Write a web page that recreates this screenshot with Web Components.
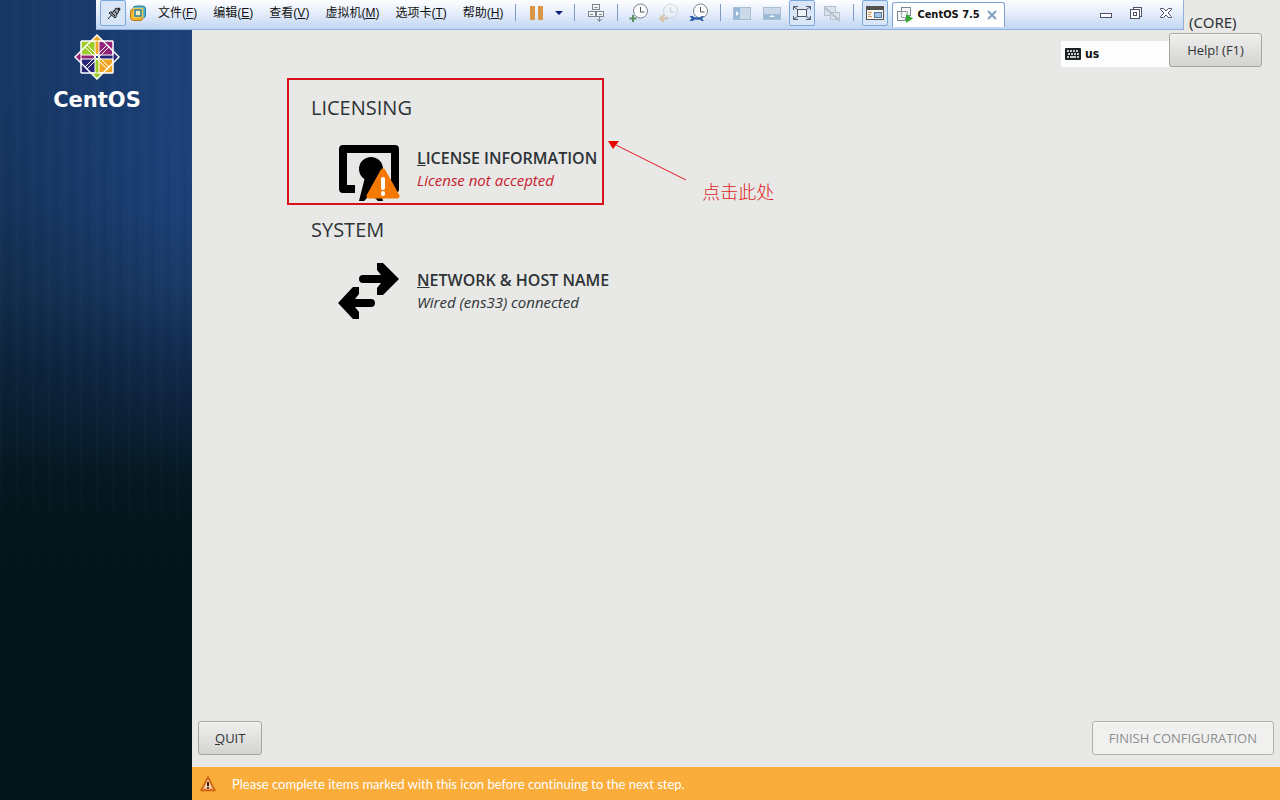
<!DOCTYPE html>
<html lang="en">
<head>
<meta charset="utf-8">
<meta name="viewport" content="width=device-width, initial-scale=1">
<title>CentOS 7.5</title>
<style>
  body {
    margin: 0;
    color: #2e3436;
    font-family: "Noto Sans", "Open Sans", sans-serif;
    font-size: 13px;
  }
</style>
</head>
<body>

<setup-screen>
  <brand-sidebar slot="side"></brand-sidebar>
  <hub-header slot="header" product="(CORE)" layout="us"></hub-header>

  <spoke-group heading="LICENSING" highlight>
    <hub-spoke icon="license" status="error">
      <span slot="name"><u>L</u>ICENSE INFORMATION</span>
      License not accepted
    </hub-spoke>
    <call-out slot="note">点击此处</call-out>
  </spoke-group>

  <spoke-group heading="SYSTEM">
    <hub-spoke icon="network">
      <span slot="name"><u>N</u>ETWORK &amp; HOST NAME</span>
      Wired (ens33) connected
    </hub-spoke>
  </spoke-group>

  <gtk-button slot="actions"><u>Q</u>UIT</gtk-button>
  <gtk-button slot="actions" disabled>FINISH CONFIGURATION</gtk-button>
  <warning-bar slot="warning">Please complete items marked with this icon before continuing to the next step.</warning-bar>
</setup-screen>

<vm-toolbar></vm-toolbar>

<script>
(function () {
  const ICONS = {
    pin: `<path d="M3 14 7 9.500" stroke="#222" stroke-width="1"/><path d="M4 8c2-2 3 0 5-2l2-3 3 2-1 3c-2 1-1 4-3 5z" fill="#9aa4ae" stroke="#222"/><path d="M6 7l4 4M9 5l3 4" stroke="#222"/><path d="M13 3l2 2" stroke="#222" stroke-width="2"/>`,
    vmware: `<rect x="3" y="1" width="12.500" height="12" rx="3" fill="#48b5d6" stroke="#277d9b"/><path d="M3 4a3 3 0 0 0-2.500 3v5.500a3 3 0 0 0 3 3H10a3 3 0 0 0 3-2.500H8L3 9z" fill="#f6b32c" stroke="#b87810"/><rect x="3.500" y="3.500" width="9" height="9" fill="#f5d36a" stroke="#f6c54c" stroke-width="1.500"/><rect x="5" y="5" width="6" height="6" fill="#f3edc0" stroke="#2b7f9c" stroke-width="1.500"/>`,
    pause: `<path d="M1 1h5v14H1zM9 1h5v14H9z" fill="#dc9447"/>`,
    keys: `<g fill="#f6f8fa" stroke="#7d858d"><rect x="4.500" y="-.5" width="7" height="5"/><rect x=".5" y="6.500" width="7" height="5"/><rect x="8.500" y="6.500" width="7" height="5"/><path d="M2 9.500h3M11 9.500h3M6.500 2.500h3M11.500 11.500v5M9 14l2.500 2.500L14 14" fill="none"/></g>`,
    snapshot: `<circle cx="9.500" cy="6" r="7" fill="#fbfcfd" stroke="#7b838a"/><path d="M9.500 2v5h4" fill="none" stroke="#555"/><path d="M2 10v7M-1.500 13.500h7" stroke="#5b9160" stroke-width="2"/>`,
    revert: `<g opacity=".45"><circle cx="9.500" cy="6" r="7" fill="#f4f6f8" stroke="#a9b1b9"/><path d="M9.500 2v5h4" fill="none" stroke="#999"/><path d="M7 13.500H0M3 10l-4 3.500L3 17" fill="none" stroke="#d79a4a" stroke-width="2"/></g>`,
    manage: `<circle cx="9.500" cy="6" r="7" fill="#fbfcfd" stroke="#7b838a"/><path d="M9.500 2v5h4" fill="none" stroke="#555"/><path d="M1 13.500h9" stroke="#2e62a8" stroke-width="2.500"/><path d="M-1.500 11H2l2 2.500L2 16h-3.500l2-2.500zM13 11h-2.500l-2 2.500 2 2.500H13l-2-2.500z" fill="#2e62a8"/>`,
    library: `<rect x="-.5" y="2.500" width="17" height="12" fill="#c9d9ea" stroke="#a9bdd3"/><path d="M0 3h6v11H0z" fill="#9bbad8"/><path d="M2 6l3 2.500L2 11z" fill="#fff"/>`,
    thumbs: `<rect x="-.5" y="2.500" width="17" height="12" fill="#c9d9ea" stroke="#a9bdd3"/><path d="M0 9h16v5H0z" fill="#9bbad8"/><path d="M5 12l3-2 3 2z" fill="#fff"/>`,
    full: `<rect x="3.500" y="4.500" width="9" height="7" fill="#eef4fa" stroke="#4e5963"/><path d="M-.5 5V1.500H4M12 1.500h4.500V5M16.500 11v3.500H12M4 14.500H-.5V11M0 2l3 2M16 2l-3 2M0 14l3-2M16 14l-3-2" fill="none" stroke="#4e5963"/>`,
    unity: `<g fill="#dbe3ec" stroke="#b4c0cd"><rect x=".5" y="1.500" width="11" height="9"/><rect x="6.500" y="7.500" width="9" height="7"/><path d="M0 2l16 14" stroke-width="2"/></g>`,
    console: `<rect x="-.5" y="1.500" width="17" height="13" fill="#f7f7f5" stroke="#54524f"/><path d="M0 2h16v3H0z" fill="#54524f"/><path d="M1 7.500h4M1 9.500h3M1 11.500h4" stroke="#d69c55"/><rect x="7.500" y="7.500" width="7" height="5" fill="#a5c4e4" stroke="#52779c"/>`,
    machine: `<g fill="#f5f6f7" stroke="#7d858d"><rect x="4.500" y=".5" width="9" height="8"/><rect x=".5" y="4.500" width="8" height="9"/><rect x="4.500" y="4.500" width="6" height="6" stroke-dasharray="2 1"/></g><path d="M9 7l7 4.500L9 16z" fill="#35a935"/>`,
    min: `<rect x="2.500" y="8.500" width="11" height="4" fill="#fff" stroke="#50506b"/>`,
    restore: `<g fill="#fff" stroke="#50506b"><rect x="5.500" y="2.500" width="8" height="9"/><rect x="2.500" y="4.500" width="9" height="9"/><rect x="5.500" y="7.500" width="3" height="3"/></g>`,
    close: `<path d="M2.500 3.500h3L8 6l2.500-2.500h3v1L10 8l3.500 3.500v1h-3L8 10l-2.500 2.500h-3v-1L6 8 2.500 4.500z" fill="#fff" stroke="#50506b"/>`,
    keyboard: `<rect width="16" height="12" y="2" rx="1" fill="#1d2224"/><path d="M2 5h12M3 8h11" stroke="#fff" stroke-width="1.500" stroke-dasharray="2 1"/><path d="M2 11h2M5 11h6M12 11h2" stroke="#fff" stroke-width="1.500"/>`,
    alert: `<path d="M8 1 15 14.500H1z" fill="#ee8a3c" stroke="#c9600f" stroke-width="1.500" stroke-linejoin="round"/><path d="M8 3.500 12.500 12.500h-9z" fill="#f7cfae"/><path d="M8 6v4M8 11v1.500" stroke="#3d1c08" stroke-width="2"/>`
  };

  const icon = (name, size = 16) =>
    `<svg width="${size}" height="${size}" viewBox="0 0 16 16" fill="none" overflow="visible" aria-hidden="true">${ICONS[name]}</svg>`;

  const render = (el, html) => {
    el.attachShadow({ mode: 'open' }).innerHTML = html;
  };

  customElements.define('setup-screen', class extends HTMLElement {
    connectedCallback() {
      render(this, `
        <style>
          :host {
            display: grid;
            grid-template-columns: 15% 1fr;
            min-height: 100vh;
            background: #e8e8e6;
          }
          main { display: flex; flex-direction: column; min-width: 0; }
          .spokes {
            flex: 1;
            display: flex;
            flex-direction: column;
            align-items: flex-start;
            padding: 11px 24px 24px 95px;
          }
          footer { display: flex; justify-content: space-between; padding: 0 6px 12px; }
        </style>
        <slot name="side"></slot>
        <main>
          <slot name="header"></slot>
          <div class="spokes"><slot></slot></div>
          <footer><slot name="actions"></slot></footer>
          <slot name="warning"></slot>
        </main>`);
    }
  });

  customElements.define('brand-sidebar', class extends HTMLElement {
    connectedCallback() {
      render(this, `
        <style>
          :host {
            display: flex;
            flex-direction: column;
            align-items: center;
            gap: 8px;
            padding: 34px 0 0 2px;
            color: #fff;
            background:
              linear-gradient(180deg, #1b3c7066 0 10%, transparent 30% 55%, #02151a 74%),
              repeating-linear-gradient(90deg, #ffffff04 0 2px, transparent 2px 7px, #0000000c 7px 10px, transparent 10px 16px),
              linear-gradient(90deg, #02151a55, transparent 90%),
              linear-gradient(180deg, #1d437c 0 18%, #1c4078 26%, #193965 36%, #132f55 42%, #0f2440 50%, #081c2a 58%, #04171d 70%, #02151a 76%);
          }
          .name {
            font: bold 21px/24px "DejaVu Sans", sans-serif;
          }
        </style>
        <svg width="46" height="46" viewBox="0 0 46 46" stroke="#fff" aria-hidden="true">
          <path d="M7 7h16v16H7z" fill="#9ccd2a"/>
          <path d="M23 7h16v16H23z" fill="#932279"/>
          <path d="M7 23h16v16H7z" fill="#262577"/>
          <path d="M23 23h16v16H23z" fill="#efa724"/>
          <path d="M23 1l6 6h-4v14h-4V7h-4z" fill="#efa724"/>
          <path d="M45 23l-6 6v-4H25v-4h14v-4z" fill="#262577"/>
          <path d="M23 45l-6-6h4V25h4v14h4z" fill="#9ccd2a"/>
          <path d="M1 23l6-6v4h14v4H7v4z" fill="#932279"/>
          <path d="M23 1 45 23 23 45 1 23z" fill="none" stroke-width="1.500"/>
          <path d="M7 7h32v32H7zM11 13l10 10M13 11l10 10M35 13 25 23M33 11 23 21M11 33l10-10M13 35l10-10M35 33 25 23M33 35 23 25" fill="none"/>
          <path d="M21.500 21.500h3v3h-3z" fill="#1d437c"/>
        </svg>
        <div class="name">CentOS</div>`);
    }
  });

  customElements.define('hub-header', class extends HTMLElement {
    connectedCallback() {
      render(this, `
        <style>
          :host {
            display: flex;
            justify-content: flex-end;
            align-items: flex-end;
            padding: 12px 18px 0;
          }
          .layout {
            display: flex;
            align-items: center;
            gap: 4px;
            width: 108px;
            height: 26px;
            padding: 0 4px;
            border: 0;
            box-sizing: border-box;
            background: #fdfdfd;
            color: #111;
            font: bold 12px/16px "DejaVu Sans Condensed", "DejaVu Sans", sans-serif;
          }
          .product { padding-left: 20px; font-size: 15px; line-height: 21px; }
          gtk-button { min-width: 93px; }
        </style>
        <button class="layout" type="button" aria-label="Keyboard layout">${icon('keyboard')}<span>${this.getAttribute('layout')}</span></button>
        <div>
          <div class="product">${this.getAttribute('product')}</div>
          <gtk-button>Help! (F1)</gtk-button>
        </div>`);
    }
  });

  customElements.define('gtk-button', class extends HTMLElement {
    connectedCallback() {
      const disabled = this.hasAttribute('disabled') ? 'disabled' : '';
      render(this, `
        <style>
          :host { display: block; }
          button {
            display: block;
            width: 100%;
            height: 34px;
            padding: 0 16px;
            border: 1px solid #a5a5a1;
            border-radius: 3px;
            background: linear-gradient(#efefee, #d3d3d0);
            box-shadow: inset 0 1px #f8f8f8;
            color: #2e3436;
            font: 13px/20px "Open Sans", sans-serif;
            white-space: nowrap;
          }
          button:disabled { background: #f0f0ef; border-color: #b0b0ac; color: #8b8e8f; }
        </style>
        <button type="button" ${disabled}><slot></slot></button>`);
    }
  });

  customElements.define('spoke-group', class extends HTMLElement {
    connectedCallback() {
      render(this, `
        <style>
          :host { display: block; position: relative; padding: 11px 5px 2px 24px; }
          :host([highlight]) { border: 2px solid #d9111b; padding: 14px 5px 1px 22px; }
          h2 { margin: 0 0 22px; font: 20px/28px "Open Sans", sans-serif; }
        </style>
        <h2>${this.getAttribute('heading')}</h2>
        <slot></slot>
        <slot name="note"></slot>`);
    }
  });

  customElements.define('hub-spoke', class extends HTMLElement {
    connectedCallback() {
      const art = {
        license: `
          <path d="M5 1h52a4 4 0 0 1 4 4v40a4 4 0 0 1-4 4H45v-8h8V9H9v32h8v8H5a4 4 0 0 1-4-4V5a4 4 0 0 1 4-4z"/>
          <circle cx="33" cy="25" r="12"/>
          <path d="M27 33h12l6 24h-5l-7-7-7 7h-5z"/>
          <path d="M45 27 59 52H31z" fill="#f57900" stroke="#f57900" stroke-width="5" stroke-linejoin="round"/>
          <path d="M45 35v9M45 49v1" stroke="#fff" stroke-width="4" stroke-linecap="round"/>`,
        network: `
          <path d="M25 9h18l-4-5v-7h6L61 13 45 29h-6v-7l4-5H25a4 4 0 0 1 0-8z"/>
          <path d="M33 41H17l4 5v7h-6L0 37l15-16h6v7l-4 5h16a4 4 0 0 1 0 8z"/>`
      };
      render(this, `
        <style>
          :host { display: block; }
          a { display: flex; gap: 15px; padding-left: 27px; color: inherit; text-decoration: none; }
          svg { display: block; flex: none; overflow: visible; }
          .text { padding-top: 3px; line-height: 22px; white-space: nowrap; font-family: "Open Sans", sans-serif; }
          .name { font-size: 16px; font-weight: 600; }
          .status { font-style: italic; font-size: 15px; }
          :host([status="error"]) .status { color: #c8202c; }
        </style>
        <a href="#">
          <svg width="64" height="58" viewBox="0 0 64 58" aria-hidden="true">${art[this.getAttribute('icon')]}</svg>
          <div class="text">
            <div class="name"><slot name="name"></slot></div>
            <div class="status"><slot></slot></div>
          </div>
        </a>`);
    }
  });

  // Red note that hangs off the right edge of a group
  customElements.define('call-out', class extends HTMLElement {
    connectedCallback() {
      render(this, `
        <style>
          :host {
            position: absolute;
            left: 100%;
            top: 59px;
            display: flex;
            align-items: flex-end;
            gap: 16px;
            color: #e01b24;
            font: 18px/24px "Noto Sans CJK SC", sans-serif;
            font-weight: 300;
            white-space: nowrap;
          }
        </style>
        <svg width="84" height="64" viewBox="0 0 84 64" aria-hidden="true">
          <path d="M10 4 84 41" stroke="#e01b24"/>
          <path d="M6 2h11l-6 8z" fill="#e60000"/>
        </svg>
        <span><slot></slot></span>`);
    }
  });

  customElements.define('warning-bar', class extends HTMLElement {
    connectedCallback() {
      render(this, `
        <style>
          :host {
            display: flex;
            align-items: center;
            gap: 16px;
            min-height: 33px;
            padding: 0 8px;
            background: #fbad3c;
            color: #fff;
            font-family: Lato, sans-serif;
            font-size: 13px;
            font-variant-ligatures: none;
            line-height: 16px;
          }
        </style>
        ${icon('alert')}
        <span><slot></slot></span>`);
    }
  });

  customElements.define('vm-toolbar', class extends HTMLElement {
    connectedCallback() {
      const menus = [['文件', 'F'], ['编辑', 'E'], ['查看', 'V'], ['虚拟机', 'M'], ['选项卡', 'T'], ['帮助', 'H']];
      const menu = menus.map(([text, key]) => `<button type="button">${text}(<u>${key}</u>)</button>`).join('');
      const tool = (name, label, cls = '') =>
        `<button type="button" class="tool ${cls}" aria-label="${label}">${icon(name)}</button>`;

      render(this, `
        <style>
          :host {
            position: absolute;
            top: 0;
            left: 96px;
            right: 96px;
            display: flex;
            align-items: flex-start;
            gap: 4px;
            height: 30px;
            padding: 0 4px;
            box-sizing: border-box;
            border-bottom: 1px solid #8fb0da;
            border-right: 1px solid #8fb0da;
            background: linear-gradient(#fdfeff, #e6eefa 45%, #bfd6f2);
            color: #111;
            font: 12px/16px "Liberation Sans", "Noto Sans CJK SC", sans-serif;
          }
          button { border: 0; padding: 0; background: none; color: inherit; font: inherit; white-space: nowrap; }
          svg { display: block; }
          .tool {
            display: flex;
            align-items: center;
            justify-content: center;
            flex: none;
            width: 26px;
            height: 26px;
            border: 1px solid transparent;
            box-sizing: border-box;
          }
          .on { border-color: #7aa7dd; border-radius: 2px; background: #d8e6f7; }
          .logo { padding-top: 5px; }
          nav { display: flex; gap: 16px; padding: 5px 4px 0 8px; }
          .drop { width: 10px; height: 26px; margin-right: 2px; }
          .sep { flex: none; width: 1px; height: 17px; margin: 4px 4px 0; background: #7f9cc0; }
          .tab {
            display: flex;
            align-items: center;
            gap: 4px;
            height: 25px;
            margin-top: 2px;
            padding: 0 4px;
            border: 1px solid #7fa3d0;
            border-bottom: 0;
            border-radius: 3px 3px 0 0;
            box-sizing: border-box;
            background: #fff;
            font: bold 11px/16px "DejaVu Sans Condensed", "DejaVu Sans", sans-serif;
          }
          .tab button { display: flex; align-items: center; gap: 4px; }
          .window { display: flex; gap: 4px; margin-left: auto; }
        </style>
        ${tool('pin', 'Pin', 'on')}
        <span class="logo">${icon('vmware')}</span>
        <nav>${menu}</nav>
        <i class="sep"></i>
        ${tool('pause', 'Suspend')}
        <button type="button" class="drop" aria-label="Power options">
          <svg width="10" height="6" viewBox="0 0 10 6" aria-hidden="true"><path d="M1 1h8L5 5z" fill="#0c1c7c"/></svg>
        </button>
        <i class="sep"></i>
        ${tool('keys', 'Send Ctrl+Alt+Del')}
        <i class="sep"></i>
        ${tool('snapshot', 'Take snapshot')}
        ${tool('revert', 'Revert snapshot')}
        ${tool('manage', 'Manage snapshots')}
        <i class="sep"></i>
        ${tool('library', 'Library')}
        ${tool('thumbs', 'Thumbnails')}
        ${tool('full', 'Full screen', 'on')}
        ${tool('unity', 'Unity')}
        <i class="sep"></i>
        ${tool('console', 'Console view', 'on')}
        <div class="tab">
          <button type="button">${icon('machine')}CentOS 7.5</button>
          <button type="button" aria-label="Close tab">
            <svg width="16" height="16" viewBox="0 0 16 16" aria-hidden="true"><path d="M4 4l8 8M12 4l-8 8" stroke="#7f9fc0" stroke-width="2"/></svg>
          </button>
        </div>
        <div class="window">
          ${tool('min', 'Minimize')}
          ${tool('restore', 'Restore')}
          ${tool('close', 'Close')}
        </div>`);
    }
  });
})();
</script>
</body>
</html>
